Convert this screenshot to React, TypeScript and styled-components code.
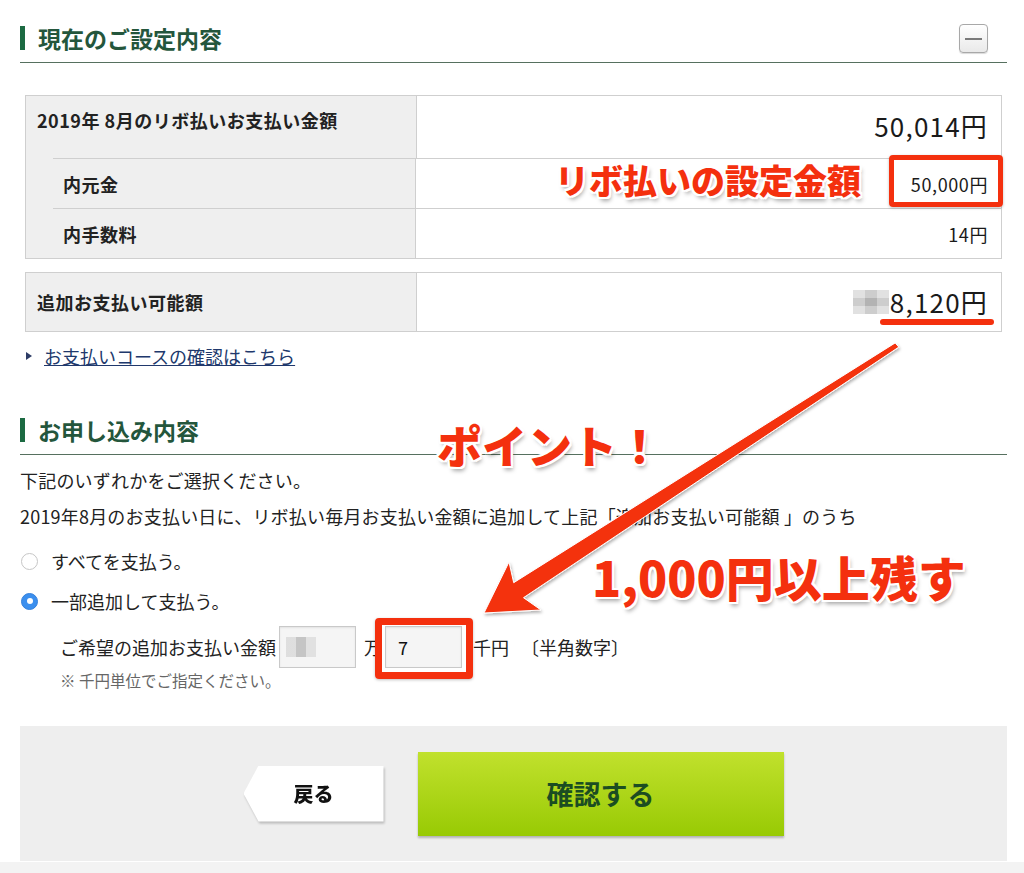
import React from 'react';
import styled, { createGlobalStyle, css } from 'styled-components';

const GlobalStyle = createGlobalStyle`
  body {
    margin: 0;
    background: #fff;
    font-family: "Noto Sans CJK JP", "Noto Sans", sans-serif;
    color: #222;
  }
`;

const Page = styled.div`
  position: relative;
  width: 1024px;
  height: 873px;
  overflow: hidden;
  box-sizing: border-box;
  padding: 14px 17px 0 20px;
  background: linear-gradient(#fff 862px, #f3f3f3 862px);
`;

const SectionHeader = styled.div<{ $top?: number }>`
  display: flex;
  align-items: center;
  height: 48px;
  margin-top: ${({ $top = 0 }) => $top}px;
  border-bottom: 1px solid #56705f;
`;

const SectionTitle = styled.h2`
  margin: 0;
  padding-left: 13px;
  border-left: 5px solid #1c6a42;
  font-size: 23px;
  line-height: 24px;
  font-weight: 700;
  color: #24563c;
`;

const ToggleButton = styled.button`
  position: relative;
  margin-left: auto;
  margin-right: 19px;
  width: 29px;
  height: 29px;
  padding: 0;
  border: 1px solid #a8a8a8;
  border-radius: 4px;
  background: linear-gradient(#fff, #e9e9e9);
  box-shadow: 0 1px 1px rgba(0, 0, 0, 0.15);

  &::after {
    content: '';
    position: absolute;
    left: 5px;
    right: 5px;
    top: 13px;
    height: 2px;
    background: #7a7a7a;
  }
`;

const InfoTable = styled.div<{ $top: number }>`
  margin: ${({ $top }) => $top}px 5px 0;
  border: 1px solid #cfcfcf;
  background: #efefef;
`;

const MainRow = styled.div<{ $height: number }>`
  display: grid;
  grid-template-columns: 391px 1fr;
  height: ${({ $height }) => $height}px;
`;

const labelBase = css`
  border-right: 1px solid #cfcfcf;
  font-size: 18px;
  font-weight: 700;
  letter-spacing: 0.5px;
  color: #222;
  background: #efefef;
`;

const MainLabel = styled.div<{ $alignTop?: boolean }>`
  ${labelBase};
  display: flex;
  align-items: ${({ $alignTop }) => ($alignTop ? 'flex-start' : 'center')};
  padding: ${({ $alignTop }) => ($alignTop ? '12px' : '0')} 0 0 11px;
  line-height: 24px;
`;

const ValueCell = styled.div<{ $size: number; $alignTop?: boolean }>`
  display: flex;
  align-items: ${({ $alignTop }) => ($alignTop ? 'flex-start' : 'center')};
  justify-content: flex-end;
  padding: ${({ $alignTop }) => ($alignTop ? '14px' : '0')} 13px 0 0;
  background: #fff;
  font-size: ${({ $size }) => $size}px;
  letter-spacing: ${({ $size }) => ($size > 20 ? 1.2 : 0.6)}px;
  line-height: 32px;
  color: #1a1a1a;
`;

const SubGroup = styled.div`
  padding-left: 27px;
  background: #efefef;
`;

const SubRow = styled.div`
  display: grid;
  grid-template-columns: 363px 1fr;
  height: 49px;
  border-top: 1px solid #cfcfcf;
`;

const SubLabel = styled.div`
  ${labelBase};
  display: flex;
  align-items: center;
  padding-left: 10px;
`;

const Blur = styled.span`
  display: inline-grid;
  grid-template-columns: repeat(3, 12px);
  grid-template-rows: repeat(3, 8px);
  margin-right: 1px;
  opacity: 0.75;

  & > i:nth-child(odd) {
    background: #d7d7d7;
  }
  & > i:nth-child(even) {
    background: #bdbdbd;
  }
  & > i:nth-child(5) {
    background: #9a9a9a;
  }
`;

const LinkRow = styled.div`
  display: flex;
  align-items: center;
  gap: 12px;
  margin-top: 12px;
  padding-left: 6px;
  line-height: 24px;
`;

const Triangle = styled.span`
  width: 0;
  height: 0;
  border-top: 4px solid transparent;
  border-bottom: 4px solid transparent;
  border-left: 6px solid #2d3c66;
`;

const TextLink = styled.a`
  color: #20386c;
  font-size: 18px;
  text-decoration: underline;
`;

const Paragraph = styled.p<{ $top: number }>`
  margin: ${({ $top }) => $top}px 0 0;
  font-size: 18px;
  letter-spacing: 0.2px;
  line-height: 26px;
  color: #222;
`;

const RadioRow = styled.label<{ $top: number }>`
  display: flex;
  align-items: center;
  gap: 13px;
  height: 26px;
  margin-top: ${({ $top }) => $top}px;
  padding-left: 1px;
  font-size: 18px;
  color: #222;
`;

const RadioMark = styled.span<{ $checked?: boolean }>`
  position: relative;
  box-sizing: border-box;
  width: 17px;
  height: 17px;
  border-radius: 50%;
  ${({ $checked }) =>
    $checked
      ? css`
          background: #3b8fee;
          border: 1px solid #3481dc;
          &::after {
            content: '';
            position: absolute;
            left: 4.5px;
            top: 4.5px;
            width: 6px;
            height: 6px;
            border-radius: 50%;
            background: #fff;
          }
        `
      : css`
          background: #fff;
          border: 1px solid #c6c6c6;
        `}
`;

const AmountRow = styled.div`
  display: flex;
  align-items: center;
  height: 42px;
  margin-top: 12px;
  padding-left: 40px;
  font-size: 18px;
  color: #222;
`;

const AmountInput = styled.div<{ $gap: number }>`
  display: flex;
  align-items: center;
  box-sizing: border-box;
  width: 77px;
  height: 42px;
  margin: 0 ${({ $gap }) => $gap}px 0 3px;
  padding-left: 12px;
  border: 1px solid #c9c9c9;
  background: #f5f5f5;
  box-shadow: inset 0 1px 2px rgba(0, 0, 0, 0.08);
  font-size: 18px;
  color: #111;
`;

const InputBlur = styled.span`
  width: 30px;
  height: 20px;
  margin-left: -6px;
  background: linear-gradient(90deg, #d9d9d9 0 33%, #b9b9b9 33% 66%, #dcdcdc 66%);
  opacity: 0.8;
`;

const Hint = styled.span`
  margin-left: 12px;
`;

const Note = styled.p`
  margin: 2px 0 0;
  padding-left: 40px;
  font-size: 15.5px;
  line-height: 20px;
  color: #666;
`;

const ActionPanel = styled.div`
  display: flex;
  align-items: center;
  justify-content: center;
  gap: 34px;
  height: 135px;
  margin-top: 36px;
  background: #eeeeee;
`;

const BackShadow = styled.div`
  filter: drop-shadow(1px 2px 1px rgba(0, 0, 0, 0.22));
`;

const BackButton = styled.button`
  width: 140px;
  height: 56px;
  border: 0;
  background: #fff;
  clip-path: polygon(15px 0, 100% 0, 100% 100%, 15px 100%, 0 50%);
  font-family: inherit;
  font-size: 20px;
  font-weight: 900;
  color: #111;
`;

const ConfirmButton = styled.button`
  width: 366px;
  height: 84px;
  border: 0;
  background: linear-gradient(#c1e12d, #98ca04);
  box-shadow: 0 2px 2px rgba(0, 0, 0, 0.25);
  font-family: inherit;
  font-size: 27px;
  font-weight: 700;
  color: #1b4d22;
`;

/* screenshot annotations laid over the page */
const outline = css`
  text-shadow: 2px 0 0 #fff, -2px 0 0 #fff, 0 2px 0 #fff, 0 -2px 0 #fff, 2px 2px 0 #fff,
    -2px -2px 0 #fff, 2px -2px 0 #fff, -2px 2px 0 #fff, 2px 4px 4px rgba(0, 0, 0, 0.35);
`;

const Callout = styled.div<{ $x: number; $y: number; $size: number }>`
  position: absolute;
  left: ${({ $x }) => $x}px;
  top: ${({ $y }) => $y}px;
  font-size: ${({ $size }) => $size}px;
  line-height: 1;
  font-weight: 900;
  color: #f4300e;
  white-space: nowrap;
  ${outline};
`;

const RedFrame = styled.div<{ $x: number; $y: number; $w: number; $h: number; $b: number }>`
  position: absolute;
  left: ${({ $x }) => $x}px;
  top: ${({ $y }) => $y}px;
  width: ${({ $w }) => $w}px;
  height: ${({ $h }) => $h}px;
  box-sizing: border-box;
  border: ${({ $b }) => $b}px solid #f4300e;
  border-radius: 4px;
  box-shadow: 0 1px 3px rgba(0, 0, 0, 0.25);
`;

const RedUnderline = styled.div`
  position: absolute;
  left: 880px;
  top: 319px;
  width: 114px;
  height: 6px;
  border-radius: 3px;
  background: #f4300e;
`;

const ArrowLayer = styled.svg`
  position: absolute;
  left: 0;
  top: 0;
  pointer-events: none;
`;

const Arrow = () => (
  <ArrowLayer width="1024" height="873" viewBox="0 0 1024 873">
    <defs>
      <filter id="arrowShadow" x="-10%" y="-10%" width="120%" height="120%">
        <feDropShadow dx="1" dy="2" stdDeviation="1.5" floodOpacity="0.3" />
      </filter>
    </defs>
    <polygon
      points="898.8,347.1 523.5,597.7 541,610 484,613 509,562 513.7,582.7 895.2,342.9"
      fill="#f4300e"
      stroke="#fff"
      strokeWidth="1"
      strokeLinejoin="round"
      filter="url(#arrowShadow)"
    />
  </ArrowLayer>
);

const PixelBlur = () => (
  <Blur>
    {Array.from({ length: 9 }).map((_, i) => (
      <i key={i} />
    ))}
  </Blur>
);

export default function App() {
  return (
    <>
      <GlobalStyle />
      <Page>
        <SectionHeader>
          <SectionTitle>現在のご設定内容</SectionTitle>
          <ToggleButton aria-label="閉じる" />
        </SectionHeader>

        <InfoTable $top={32}>
          <MainRow $height={62}>
            <MainLabel $alignTop>2019年 8月のリボ払いお支払い金額</MainLabel>
            <ValueCell $size={26} $alignTop>
              50,014円
            </ValueCell>
          </MainRow>
          <SubGroup>
            <SubRow>
              <SubLabel>内元金</SubLabel>
              <ValueCell $size={18}>50,000円</ValueCell>
            </SubRow>
            <SubRow>
              <SubLabel>内手数料</SubLabel>
              <ValueCell $size={18}>14円</ValueCell>
            </SubRow>
          </SubGroup>
        </InfoTable>

        <InfoTable $top={13}>
          <MainRow $height={58}>
            <MainLabel>追加お支払い可能額</MainLabel>
            <ValueCell $size={26}>
              <PixelBlur />
              8,120円
            </ValueCell>
          </MainRow>
        </InfoTable>

        <LinkRow>
          <Triangle />
          <TextLink href="#">お支払いコースの確認はこちら</TextLink>
        </LinkRow>

        <SectionHeader $top={38}>
          <SectionTitle>お申し込み内容</SectionTitle>
        </SectionHeader>

        <Paragraph $top={12}>下記のいずれかをご選択ください。</Paragraph>
        <Paragraph $top={10}>
          2019年8月のお支払い日に、リボ払い毎月お支払い金額に追加して上記「追加お支払い可能額 」のうち
        </Paragraph>

        <RadioRow $top={19}>
          <RadioMark />
          すべてを支払う。
        </RadioRow>
        <RadioRow $top={14}>
          <RadioMark $checked />
          一部追加して支払う。
        </RadioRow>

        <AmountRow>
          ご希望の追加お支払い金額
          <AmountInput $gap={8}>
            <InputBlur />
          </AmountInput>
          万
          <AmountInput $gap={11}>7</AmountInput>
          千円
          <Hint>〔半角数字〕</Hint>
        </AmountRow>
        <Note>※ 千円単位でご指定ください。</Note>

        <ActionPanel>
          <BackShadow>
            <BackButton>戻る</BackButton>
          </BackShadow>
          <ConfirmButton>確認する</ConfirmButton>
        </ActionPanel>

        <Callout $x={555} $y={163} $size={34}>
          リボ払いの設定金額
        </Callout>
        <RedFrame $x={889} $y={155} $w={114} $h={52} $b={5} />
        <RedUnderline />
        <Arrow />
        <Callout $x={437} $y={422} $size={45}>
          ポイント！
        </Callout>
        <Callout $x={592} $y={552} $size={48}>
          1,000円以上残す
        </Callout>
        <RedFrame $x={375} $y={618} $w={98} $h={61} $b={7} />
      </Page>
    </>
  );
}
